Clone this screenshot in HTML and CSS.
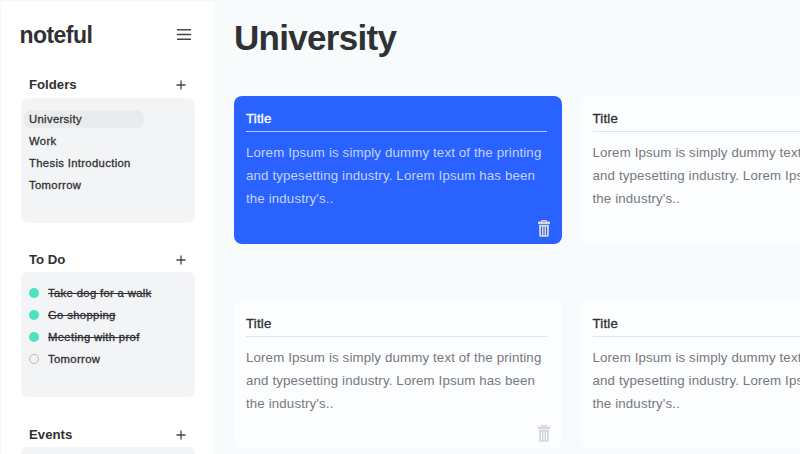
FILE: index.html
```html
<!DOCTYPE html>
<html lang="en">
<head>
<meta charset="utf-8">
<title>noteful</title>
<link rel="stylesheet" href="styles.css">
</head>
<body>
<svg class="sprite" aria-hidden="true">
  <symbol id="trash" viewBox="0 0 12 17">
    <path fill-rule="evenodd" d="M3.2 1.500V.800Q3.200 0 4 0H8Q8.800 0 8.800.800V1.500H11.200Q12 1.500 12 2.300V4H0V2.300Q0 1.500.800 1.500ZM4.400 1.500H7.600V1H4.400ZM1 4.800H11L10.700 15.900Q10.700 16.700 9.900 16.700H2.100Q1.300 16.700 1.300 15.900ZM3 6.800V14.900H4V6.800ZM5.500 6.800V14.900H6.500V6.800ZM8 6.800V14.900H9V6.800Z"/>
  </symbol>
  <symbol id="plus" viewBox="0 0 10 10"><path d="M5 .5V9.500M.5 5H9.500"/></symbol>
</svg>
<div class="app">
  <aside class="sidebar">
    <header class="brand">
      <span class="logo">noteful</span>
      <svg class="menu" viewBox="0 0 14 11"><path d="M0 .800H14M0 5.500H14M0 10.200H14"/></svg>
    </header>
    <section class="group">
      <div class="group-head"><h2>Folders</h2><svg class="plus"><use href="#plus"/></svg></div>
      <ul class="panel">
        <li class="selected">University</li>
        <li>Work</li>
        <li>Thesis Introduction</li>
        <li>Tomorrow</li>
      </ul>
    </section>
    <section class="group">
      <div class="group-head"><h2>To Do</h2><svg class="plus"><use href="#plus"/></svg></div>
      <ul class="panel">
        <li class="done"><i class="dot"></i><span>Take dog for a walk</span></li>
        <li class="done"><i class="dot"></i><span>Go shopping</span></li>
        <li class="done"><i class="dot"></i><span>Meeting with prof</span></li>
        <li><i class="dot"></i><span>Tomorrow</span></li>
      </ul>
    </section>
    <section class="group">
      <div class="group-head"><h2>Events</h2><svg class="plus"><use href="#plus"/></svg></div>
      <ul class="panel"></ul>
    </section>
  </aside>
  <main class="content">
    <h1>University</h1>
    <div class="notes">
      <article class="note active"><h3>Title</h3><p>Lorem Ipsum is simply dummy text of the printing<br>and typesetting industry. Lorem Ipsum has been<br>the industry's..</p><svg class="trash"><use href="#trash"/></svg></article>
      <article class="note"><h3>Title</h3><p>Lorem Ipsum is simply dummy text of the printing<br>and typesetting industry. Lorem Ipsum has been<br>the industry's..</p><svg class="trash"><use href="#trash"/></svg></article>
      <article class="note"><h3>Title</h3><p>Lorem Ipsum is simply dummy text of the printing<br>and typesetting industry. Lorem Ipsum has been<br>the industry's..</p><svg class="trash"><use href="#trash"/></svg></article>
      <article class="note"><h3>Title</h3><p>Lorem Ipsum is simply dummy text of the printing<br>and typesetting industry. Lorem Ipsum has been<br>the industry's..</p><svg class="trash"><use href="#trash"/></svg></article>
    </div>
  </main>
</div>
</body>
</html>
```
FILE: styles.css
```css
* { box-sizing: border-box; }
body {
  margin: 0;
  overflow: hidden;
  background: #f7fbfc;
  color: #303134;
  font-family: "Liberation Sans", Arial, sans-serif;
}
h1, h2, h3, p, ul { margin: 0; padding: 0; }
ul { list-style: none; }
.sprite { display: none; }
.app { display: flex; height: 454px; overflow: hidden; }
.sidebar {
  flex: none;
  width: 215px;
  border-left: 1px solid #f3f9fd;
  border-top: 1px solid #f3f9fd;
  background: #fff;
  padding: 20px 20px 0;
}
.brand {
  display: flex;
  justify-content: space-between;
  height: 54px;
  padding: 0 4px 0 0;
}
.logo { font-size: 23px; line-height: 29px; font-weight: bold; letter-spacing: -0.55px; margin-left: -1.500px; }
.menu { width: 14px; height: 11px; margin-top: 7.500px; stroke: #45464a; stroke-width: 1.400; }
.group { height: 174.700px; }
.group-head {
  display: flex;
  justify-content: space-between;
  align-items: center;
  height: 22.500px;
  padding: 0 9px 2px 8px;
}
h2 { font-size: 13.200px; line-height: 18px; }
.plus { width: 10px; height: 10px; fill: none; stroke: #45464a; stroke-width: 1.300; }
.panel {
  height: 125px;
  border-radius: 7px;
  background: #f3f4f6;
  padding: 12px 3px;
}
.panel li {
  display: flex;
  align-items: center;
  height: 18px;
  margin-bottom: 4px;
  padding-left: 5px;
  font-size: 11.300px;
  letter-spacing: 0.33px;
  -webkit-text-stroke: 0.3px #303134;
}
.panel .selected { width: 120px; height: 18px; border-radius: 7px; background: #eaebec; }
.dot { width: 10px; height: 10px; margin-right: 9px; border: 1px solid #b6b8bb; border-radius: 50%; }
.done .dot { border: 0; background: #4be3c0; }
.done span { text-decoration: line-through; }
.content { flex: none; padding: 17px 0 0 19px; }
h1 { height: 79px; font-size: 35px; line-height: 41px; letter-spacing: -0.7px; }
.notes { display: grid; grid-template-columns: 328px 328px; gap: 57px 18.500px; }
.note {
  display: flex;
  flex-direction: column;
  height: 148px;
  border-radius: 8px;
  background: #fcfdfe;
  padding: 13px 12px 7px;
}
h3 {
  width: 301px;
  height: 23px;
  border-bottom: 1px solid #e3e4e6;
  font-size: 13.200px;
  line-height: 20px;
  font-weight: normal;
  letter-spacing: 0.2px;
  -webkit-text-stroke: 0.35px currentColor;
}
.note p { margin-top: 9px; color: #77787b; font-size: 13.300px; letter-spacing: 0.135px; line-height: 23px; white-space: nowrap; }
.trash { flex: none; width: 12px; height: 17px; margin: auto 0 0 292px; fill: #d6d7d9; }
.active { background: #2962ff; color: #fff; }
.active h3 { border-color: #b5c8ff; }
.active p { color: #c4d2fc; }
```
